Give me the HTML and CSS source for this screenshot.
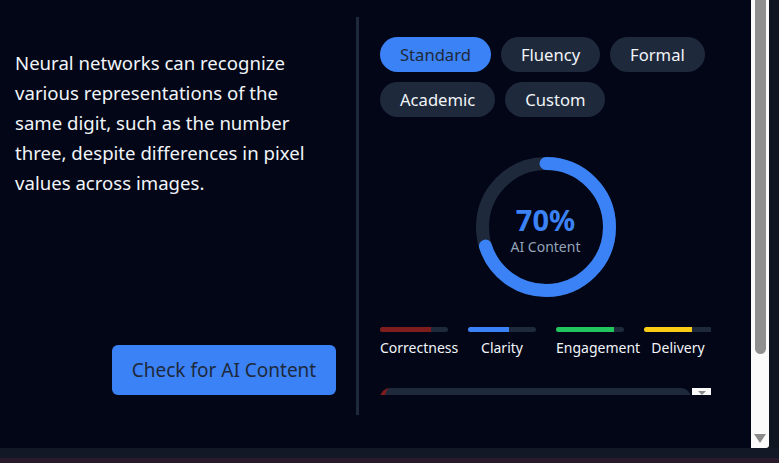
FILE: index.html
```html
<!DOCTYPE html>
<html lang="en">

<head>
    <meta charset="UTF-8">
    <meta name="viewport" content="width=device-width, initial-scale=1.0">
    <title>AI Content Checker</title>
    <link rel="stylesheet" href="styles.css">
</head>

<body>
    <div class="frame">
        <div class="app">
            <section class="input-side">
                <p class="sample-text">Neural networks can recognize<br>various representations of the<br>same digit, such as the number<br>three, despite differences in pixel<br>values across images.</p>
                <button class="check-btn" type="button">Check for AI Content</button>
            </section>

            <section class="panel">
                <div class="panel-inner">
                    <div class="modes">
                        <button class="mode active" type="button">Standard</button>
                        <button class="mode" type="button">Fluency</button>
                        <button class="mode" type="button">Formal</button>
                        <button class="mode" type="button">Academic</button>
                        <button class="mode" type="button">Custom</button>
                    </div>

                    <div class="score">
                        <svg class="ring" width="140" height="140" viewBox="0 0 140 140">
                            <circle cx="70" cy="70" r="63.5" fill="none" stroke="#1e293b" stroke-width="13" />
                            <circle cx="70" cy="70" r="63.5" fill="none" stroke="#3b82f6" stroke-width="13"
                                stroke-linecap="round" stroke-dasharray="279.3 400" transform="rotate(-90 70 70)" />
                        </svg>
                        <div class="score-text">
                            <div class="score-value">70%</div>
                            <div class="score-label">AI Content</div>
                        </div>
                    </div>

                    <div class="metrics">
                        <div class="metric">
                            <div class="track"><div class="fill red" style="width: 75%"></div></div>
                            <div class="metric-name">Correctness</div>
                        </div>
                        <div class="metric">
                            <div class="track"><div class="fill blue" style="width: 60%"></div></div>
                            <div class="metric-name">Clarity</div>
                        </div>
                        <div class="metric">
                            <div class="track"><div class="fill green" style="width: 85%"></div></div>
                            <div class="metric-name">Engagement</div>
                        </div>
                        <div class="metric">
                            <div class="track"><div class="fill yellow" style="width: 70%"></div></div>
                            <div class="metric-name">Delivery</div>
                        </div>
                    </div>

                    <div class="results">
                        <div class="result-card"></div>
                        <div class="mini-scroll"><span class="arrow-down small"></span></div>
                    </div>
                </div>
            </section>
        </div>

        <div class="scrollbar">
            <div class="thumb"></div>
            <span class="arrow-down"></span>
        </div>
        <div class="edge"></div>
    </div>
    <div class="bottom-bar"></div>
    <div class="taskbar"></div>
</body>

</html>
```

FILE: styles.css
```css
html,
body {
    margin: 0;
    padding: 0;
    width: 779px;
    height: 463px;
    overflow: hidden;
    background-color: #020617;
    font-family: "Noto Sans", "Open Sans", sans-serif;
    color: #f1f5f9;
}

.frame {
    display: flex;
    height: 448px;
}

.app {
    width: 751px;
    display: flex;
    align-items: flex-start;
    background-color: #020617;
}

/* left side */
.input-side {
    width: 356px;
    height: 395px;
    box-sizing: border-box;
    padding: 48px 20px 0 15px;
    display: flex;
    flex-direction: column;
}

.sample-text {
    margin: 0;
    font-size: 18.6px;
    line-height: 30px;
    color: #f1f5f9;
}

.check-btn {
    margin-top: auto;
    align-self: flex-end;
    width: 224px;
    height: 50px;
    border: none;
    border-radius: 6px;
    background-color: #3b82f6;
    color: #1e293b;
    font-family: inherit;
    font-size: 19px;
    cursor: pointer;
}

/* right panel */
.panel {
    margin-top: 17px;
    height: 398px;
    box-sizing: border-box;
    border-left: 3px solid #1e293b;
    padding: 20px 20px 20px 21px;
}

.panel-inner {
    width: 331px;
    height: 358px;
    overflow: hidden;
}

.modes {
    display: flex;
    flex-wrap: wrap;
    gap: 10px;
}

.mode {
    height: 35px;
    padding: 0 20px;
    border: none;
    border-radius: 18px;
    background-color: #1e293b;
    color: #f1f5f9;
    font-family: inherit;
    font-size: 16.6px;
    cursor: pointer;
}

.mode.active {
    background-color: #3b82f6;
    color: #1e293b;
}

.score {
    position: relative;
    width: 140px;
    height: 140px;
    margin: 40px auto 0;
}

.ring {
    display: block;
}

.score-text {
    position: absolute;
    inset: 0;
    display: flex;
    flex-direction: column;
    align-items: center;
    justify-content: center;
}

.score-value {
    font-size: 29px;
    font-weight: 700;
    line-height: 34px;
    color: #3b82f6;
    margin-top: 6px;
}

.score-label {
    font-size: 14px;
    line-height: 20px;
    color: #94a3b8;
}

.metrics {
    display: grid;
    grid-template-columns: repeat(4, 68px);
    gap: 20px;
    margin-top: 30px;
}

.track {
    height: 5px;
    border-radius: 3px;
    background-color: #1e293b;
    overflow: hidden;
}

.fill {
    height: 100%;
}

.red {
    background-color: #7f1d1d;
}

.blue {
    background-color: #3b82f6;
}

.green {
    background-color: #22c55e;
}

.yellow {
    background-color: #facc15;
}

.metric-name {
    margin-top: 6px;
    font-size: 14px;
    line-height: 20px;
    text-align: center;
    white-space: nowrap;
}

.results {
    display: flex;
    margin-top: 30px;
    height: 40px;
}

.result-card {
    flex: 1;
    margin-right: 1px;
    border-left: 5px solid #7f1d1d;
    border-radius: 10px;
    background-color: #1e293b;
}

.mini-scroll {
    width: 19px;
    background-color: #fafafa;
    display: flex;
    justify-content: center;
    padding-top: 3px;
    box-sizing: border-box;
}

/* window chrome */
.scrollbar {
    width: 18px;
    background-color: #fafafa;
    border-bottom-right-radius: 3px;
    display: flex;
    flex-direction: column;
    align-items: center;
}

.thumb {
    width: 11px;
    height: 354px;
    background-color: #8f8f8f;
    border-radius: 0 0 6px 6px;
}

.arrow-down {
    margin-top: auto;
    margin-bottom: 5px;
    width: 0;
    height: 0;
    border-left: 6px solid transparent;
    border-right: 6px solid transparent;
    border-top: 9px solid #8a8a8a;
}

.arrow-down.small {
    margin: 0;
    border-left-width: 4px;
    border-right-width: 4px;
    border-top-width: 4px;
}

.edge {
    flex: 1;
    background-color: #0f1521;
}

.bottom-bar {
    height: 10px;
    background-color: #121826;
}

.taskbar {
    height: 5px;
    background-color: #2a1b2c;
}
```
